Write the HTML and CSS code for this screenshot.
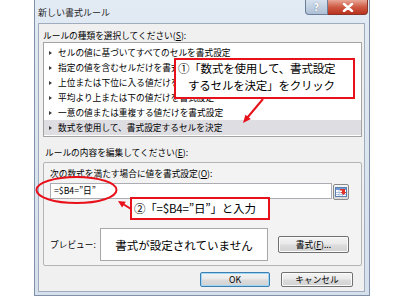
FILE: index.html
```html
<!DOCTYPE html>
<html lang="ja">
<head>
<meta charset="utf-8">
<link rel="stylesheet" href="styles.css">
</head>
<body>
<div class="dialog">
  <div class="titlebar">
    <span class="title">新しい書式ルール</span>
    <div class="caption-btns">
      <span class="cap help">?</span>
      <span class="cap close"><svg width="12" height="9" viewBox="0 0 12 9"><path d="M2 1 L10 8 M10 1 L2 8" stroke="#fff" stroke-width="2.4" stroke-linecap="round"/></svg></span>
    </div>
  </div>
  <div class="client">
    <div class="label l1">ルールの種類を選択してください(<u>S</u>):</div>
    <ul class="list">
      <li>セルの値に基づいてすべてのセルを書式設定</li>
      <li>指定の値を含むセルだけを書式設定</li>
      <li>上位または下位に入る値だけを書式設定</li>
      <li>平均より上または下の値だけを書式設定</li>
      <li>一意の値または重複する値だけを書式設定</li>
      <li class="sel">数式を使用して、書式設定するセルを決定</li>
    </ul>
    <div class="label l2">ルールの内容を編集してください(<u>E</u>):</div>
    <div class="group">
      <div class="label l3">次の数式を満たす場合に値を書式設定(<u>O</u>):</div>
      <div class="formula-row">
        <div class="input">=$B4=”日”</div>
        <div class="refbtn">
          <svg width="14" height="14" viewBox="0 0 14 14">
            <rect x="1.5" y="2.5" width="11" height="9" fill="#fff" stroke="#5a7fb0"/>
            <rect x="2" y="3" width="10" height="2" fill="#6e9bd4"/>
            <path d="M2 7.5 H12 M2 9.5 H12 M5 5 V11 M8.5 5 V11" stroke="#9cb6d8" stroke-width="0.8"/>
            <path d="M6 4 L11 4 L11 7 L12.5 7 L9.5 10 L6.5 7 L8 7 L8 5.5 L6 5.5 Z" fill="#e0302a"/>
          </svg>
        </div>
      </div>
      <div class="preview-row">
        <span class="plabel">プレビュー:</span>
        <div class="preview">書式が設定されていません</div>
        <button class="btn fmt">書式(<u>F</u>)...</button>
      </div>
    </div>
    <div class="actions">
      <button class="btn ok">OK</button>
      <button class="btn cancel">キャンセル</button>
    </div>
  </div>
</div>

<div class="callout c1">
  <div>①「数式を使用して、書式設定</div>
  <div class="indent">するセルを決定」をクリック</div>
</div>
<div class="callout c2">②「=$B4=”日”」と入力</div>

<svg class="overlay" width="400" height="300" viewBox="0 0 400 300">
  <ellipse cx="76.5" cy="190" rx="40" ry="13" fill="none" stroke="#e8101a" stroke-width="2"/>
  <line x1="263" y1="99" x2="247" y2="118" stroke="#e8101a" stroke-width="2"/>
  <polygon points="243,123 250.8,119.1 245.4,114.7" fill="#e8101a"/>
  <line x1="131" y1="209" x2="123" y2="204" stroke="#e8101a" stroke-width="2"/>
  <polygon points="118,201 122.1,207.6 125.8,201.7" fill="#e8101a"/>
</svg>
</body>
</html>
```

FILE: styles.css
```css
html, body {
  margin: 0;
  padding: 0;
  background: #ffffff;
  width: 400px;
  height: 300px;
  overflow: hidden;
  font-family: "Noto Sans CJK JP", "Noto Sans", sans-serif;
  color: #000;
}

.dialog {
  margin-left: 34px;
  width: 336px;
  height: 296px;
  box-sizing: border-box;
  border: 1px solid #7f91a8;
  border-top: none;
  background: linear-gradient(#e2eaf4, #d5e0ec);
  display: flex;
  flex-direction: column;
  padding: 0 4px 3px 3px;
}

.titlebar {
  height: 23px;
  display: flex;
  justify-content: space-between;
  align-items: flex-start;
  flex: none;
}

.title {
  font-size: 9px;
  line-height: 12px;
  margin-top: 7px;
  color: #1e1e1e;
}

.caption-btns {
  display: flex;
  margin-right: -3px;
}

.cap {
  height: 15px;
  box-sizing: border-box;
  display: flex;
  align-items: center;
  justify-content: center;
  border: 1px solid #6b7f99;
  border-top: none;
}

.help {
  width: 23px;
  border-radius: 0 0 0 4px;
  background: linear-gradient(#d6e1ee, #aebfd5);
  color: #fff;
  font-size: 10px;
  font-weight: bold;
  font-family: "DejaVu Sans", sans-serif;
  text-shadow: 0 0 1px #4c5f78;
}

.close {
  width: 40px;
  border-left: none;
  border-color: #8a3328;
  border-radius: 0 0 4px 0;
  background: linear-gradient(#e9a797, #cf5a43 50%, #b9321f);
}

.client {
  flex: 1;
  border: 1px solid #9eacbd;
  background: #f0f0f0;
  padding: 0 2px 0 4px;
  display: flex;
  flex-direction: column;
}

.label {
  font-size: 8.7px;
  line-height: 12px;
  white-space: nowrap;
}

.l1 {
  margin-top: 6px;
}

.list {
  list-style: none;
  margin: 0;
  height: 95px;
  box-sizing: border-box;
  border: 1px solid #a3a3a3;
  background: #fff;
  padding: 2px 0 0 0;
}

.list li {
  height: 15px;
  line-height: 15px;
  font-size: 8.7px;
  padding-left: 5px;
  display: flex;
  align-items: center;
  white-space: nowrap;
  overflow: hidden;
}

.list li::before {
  content: "";
  width: 0;
  height: 0;
  border-left: 3px solid #3a3a3a;
  border-top: 2.5px solid transparent;
  border-bottom: 2.5px solid transparent;
  margin-right: 6px;
  flex: none;
}

.list li.sel {
  background: #dedde2;
}

.l2 {
  margin-top: 10px;
  margin-left: 2px;
}

.group {
  margin-top: 3px;
  height: 104px;
  box-sizing: border-box;
  border: 1px solid #b4b4b4;
  border-radius: 2px;
  background: #f3f3f3;
  padding: 5px 0 0 6px;
  display: flex;
  flex-direction: column;
}

.formula-row {
  margin-top: 3px;
  display: flex;
  align-items: flex-start;
}

.input {
  width: 282px;
  height: 16px;
  box-sizing: border-box;
  border: 1px solid #abadb3;
  background: #fff;
  font-size: 8.7px;
  line-height: 14px;
  padding-left: 3px;
}

.refbtn {
  margin-left: 1px;
  margin-top: 1px;
  width: 16px;
  height: 16px;
  box-sizing: border-box;
  border: 1px solid #8a8a8a;
  border-radius: 2px;
  background: linear-gradient(#f6f6f6, #d8d8d8);
  display: flex;
  align-items: center;
  justify-content: center;
}

.preview-row {
  margin-top: 28px;
  display: flex;
  align-items: center;
}

.plabel {
  width: 50px;
  font-size: 8.7px;
  line-height: 12px;
}

.preview {
  width: 168px;
  height: 33px;
  box-sizing: border-box;
  border: 1px solid #a8a8a8;
  background: #fff;
  font-size: 11.5px;
  display: flex;
  align-items: center;
  justify-content: center;
}

.btn {
  font-family: "Noto Sans CJK JP", "Noto Sans", sans-serif;
  font-size: 8.7px;
  line-height: 12px;
  padding: 0;
  color: #000;
  box-sizing: border-box;
  border: 1px solid #707070;
  border-radius: 2px;
  background: linear-gradient(#f4f4f4 0%, #e9e9e9 48%, #dcdcdc 52%, #d2d2d2 100%);
  box-shadow: inset 0 0 0 1px #fbfbfb;
}

.fmt {
  margin-left: 10px;
  width: 71px;
  height: 17px;
}

.actions {
  margin-top: 6px;
  display: flex;
  justify-content: flex-end;
  gap: 11px;
  padding-right: 9px;
}

.ok {
  width: 70px;
  height: 15px;
  border-color: #3c7fb1;
  box-shadow: inset 0 0 0 1px #9fd6f5;
}

.cancel {
  width: 72px;
  height: 15px;
}

.callout {
  position: absolute;
  box-sizing: border-box;
  border: 2px solid #e8101a;
  background: #fff;
  font-size: 11.5px;
  letter-spacing: -0.2px;
  white-space: nowrap;
  color: #000;
}

.c1 {
  left: 174px;
  top: 58px;
  width: 181px;
  height: 41px;
  line-height: 17px;
  padding-left: 2px;
}

.c1 .indent {
  padding-left: 10px;
}

.c2 {
  left: 130px;
  top: 197px;
  width: 140px;
  height: 23px;
  line-height: 19px;
  padding-left: 2px;
}

.overlay {
  position: absolute;
  left: 0;
  top: 0;
  pointer-events: none;
}
```
